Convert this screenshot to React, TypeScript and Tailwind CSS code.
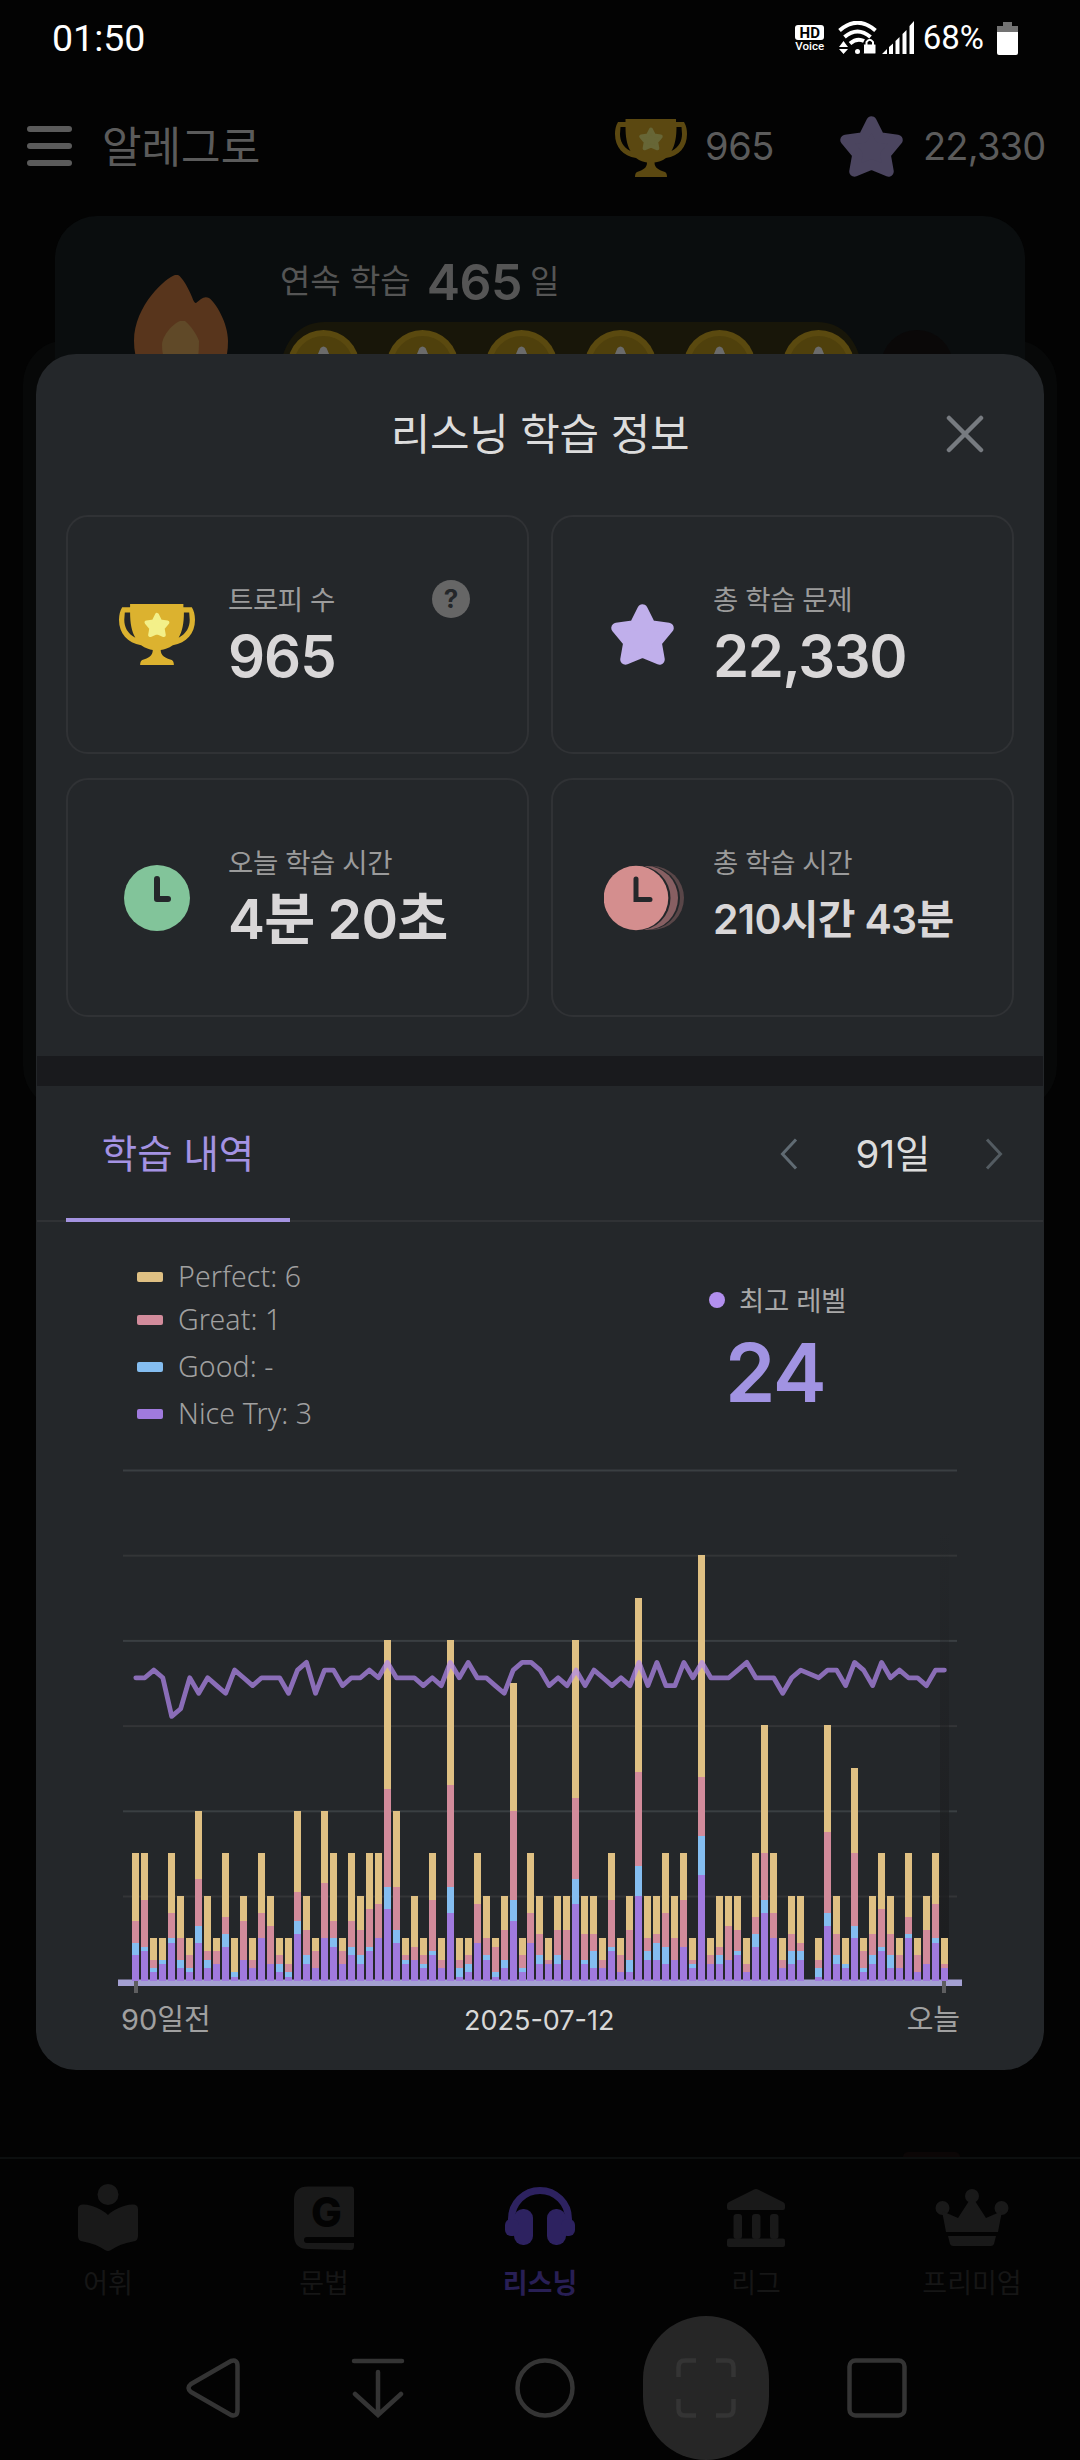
import type { ReactNode } from 'react'

type Day = [nice: number, good: number, great: number, perfect: number, level: number | null]

// Stacked totals per day (nice try, +good, +great, +perfect) and the level reached
const DAYS: Day[] = [
  [6, 9, 14, 30, 22], [7, 8, 19, 30, 22], [2, 3, 5, 10, 23], [4, 5, 5, 10, 22], [9, 10, 16, 30, 17],
  [3, 5, 10, 20, 18], [2, 3, 6, 10, 22], [9, 13, 24, 40, 20], [3, 5, 7, 20, 22], [4, 4, 7, 10, 21],
  [8, 11, 15, 30, 20], [1, 2, 2, 10, 23], [5, 5, 14, 20, 22], [3, 3, 5, 10, 21], [10, 10, 16, 30, 22],
  [4, 4, 13, 20, 22], [2, 4, 6, 10, 22], [1, 2, 4, 10, 20], [11, 14, 21, 40, 23], [4, 6, 12, 20, 24],
  [3, 3, 7, 10, 20], [10, 10, 23, 40, 23], [8, 10, 14, 30, 23], [4, 4, 7, 10, 21], [6, 8, 14, 30, 22],
  [4, 6, 12, 20, 22], [7, 8, 17, 30, 23], [10, 10, 18, 30, 22], [17, 22, 45, 80, 24], [9, 12, 22, 40, 22],
  [4, 5, 6, 10, 22], [5, 5, 8, 20, 22], [3, 4, 6, 10, 21], [6, 7, 19, 30, 22], [3, 3, 5, 10, 21],
  [16, 22, 46, 80, 24], [1, 3, 5, 10, 22], [2, 4, 6, 10, 24], [9, 9, 18, 30, 22], [5, 6, 10, 20, 22],
  [1, 2, 8, 10, 21], [3, 5, 12, 20, 20], [14, 19, 40, 70, 23], [2, 3, 6, 10, 24], [9, 9, 16, 30, 24],
  [4, 6, 11, 20, 23], [4, 4, 5, 10, 21], [4, 6, 12, 20, 22], [5, 5, 12, 20, 21], [18, 24, 43, 80, 23],
  [4, 5, 11, 20, 21], [3, 7, 11, 20, 23], [3, 3, 5, 10, 22], [7, 8, 19, 30, 21], [2, 2, 6, 10, 22],
  [2, 5, 12, 20, 21], [20, 27, 49, 90, 24], [5, 7, 10, 20, 21], [5, 9, 11, 20, 24], [4, 8, 16, 30, 21],
  [5, 5, 10, 20, 21], [8, 8, 19, 30, 24], [3, 4, 5, 10, 22], [25, 34, 48, 100, 24], [4, 4, 6, 10, 22],
  [4, 6, 8, 20, 22], [5, 5, 13, 20, 22], [6, 7, 12, 20, 23], [2, 2, 4, 10, 24], [8, 11, 15, 30, 22],
  [16, 19, 30, 60, 22], [10, 10, 16, 30, 22], [3, 3, 5, 10, 20], [4, 7, 11, 20, 22], [5, 7, 9, 20, 23],
  [0, 0, 0, 0, null], [1, 3, 5, 10, 22], [13, 16, 35, 60, 23], [4, 6, 11, 20, 23], [3, 4, 4, 10, 21],
  [10, 13, 30, 50, 24], [2, 3, 7, 10, 23], [4, 6, 11, 20, 21], [7, 8, 17, 30, 24], [3, 6, 11, 20, 22],
  [3, 3, 6, 10, 23], [10, 11, 15, 30, 22], [2, 2, 6, 10, 22], [4, 4, 12, 20, 21], [9, 10, 18, 30, 23],
  [3, 3, 4, 10, 23],
]

const COLORS = ['#a07ade', '#84bdf0', '#d28b9b', '#dfc083']

const LEGEND = [
  { label: 'Perfect: 6', color: 'bg-[#dfc083]', row: 'h-[43px]' },
  { label: 'Great: 1', color: 'bg-[#d28b9b]', row: 'h-[43px]' },
  { label: 'Good: -', color: 'bg-[#84bdf0]', row: 'h-[51px]' },
  { label: 'Nice Try: 3', color: 'bg-[#a07ade]', row: 'h-[43px]' },
]

const BASE = 513
const UNIT = 4.26

function StudyChart() {
  const points = DAYS.flatMap((d, i) =>
    d[4] === null ? [] : [`${(17.8 + i * 8.985).toFixed(1)},${(194.4 + (24 - d[4]) * 7.72).toFixed(1)}`]
  )

  return (
    <svg width="846" height="528" viewBox="0 0 846 528" className="block">
      <defs>
        <linearGradient id="today" x1="0" y1="0" x2="0" y2="1">
          <stop offset="0" stopColor="#1c1d1f" stopOpacity="0" />
          <stop offset="1" stopColor="#1c1d1f" />
        </linearGradient>
      </defs>
      {[0, 1, 2, 3, 4, 5].map((n) => (
        <rect key={n} x="5" y={1.5 + n * 85.2} width="834" height="2" fill={n % 2 ? '#333537' : '#3a3f42'} />
      ))}
      <rect x="822" y="60" width="9" height="452" fill="url(#today)" />
      <rect x="0" y="511.5" width="844" height="6.5" fill="#a4a0d2" />
      {DAYS.map((d, i) =>
        COLORS.map((fill, k) => {
          const from = k === 0 ? 0 : (d[k - 1] as number)
          const to = d[k] as number
          if (to === from) return null
          const top = Math.round(BASE - to * UNIT)
          const bottom = Math.round(BASE - from * UNIT)
          return <rect key={`${i}-${k}`} x={Math.floor(14.65 + i * 8.985)} y={top} width="7" height={bottom - top} fill={fill} />
        })
      )}
      <rect x="16" y="513" width="4" height="12" fill="#5e5e60" />
      <rect x="824" y="513" width="4" height="12" fill="#5e5e60" />
      <polyline
        points={points.join(' ')}
        fill="none"
        stroke="#b289ef"
        strokeOpacity="0.72"
        strokeWidth="4.8"
        strokeLinecap="round"
        strokeLinejoin="round"
      />
    </svg>
  )
}

const STAR_POINTS = '31.5,5.5 39.5,21.5 57.5,24 45.5,38.5 48.5,55.5 31.5,48.5 14.5,55.5 17.5,38.5 5.5,24 23.5,21.5'

function Star({ color }: { color: string }) {
  return (
    <svg width="63" height="61" viewBox="0 0 63 61">
      <polygon points={STAR_POINTS} fill={color} stroke={color} strokeWidth="10.5" strokeLinejoin="round" />
    </svg>
  )
}

function Trophy({ color, star, width }: { color: string; star: string; width: number }) {
  return (
    <svg width={width} height={(width * 58) / 72} viewBox="0 0 72 58">
      <path
        fill={color}
        fillRule="evenodd"
        d="M10.500 0H61V3H69Q72 8 72 15C72 28 64 37 51 39C47 42 43 43 39.500 43.500C39.500 49 44 51 50 53Q52 54 52 58H20Q20 54 22 53C28 51 32 49 32 43.500C29 43 25 42 21 39C8 37 0 28 0 15Q0 8 3 3H10.500ZM5.500 8H10.500C10.500 18 12 26 15.500 32C8 28 5 22 5 15ZM66.500 8H61.500C61.500 18 60 26 56.500 32C64 28 67 22 67 15Z"
      />
      <g transform="translate(24 8.300) scale(.38)">
        <polygon points={STAR_POINTS} fill={star} stroke={star} strokeWidth="10" strokeLinejoin="round" />
      </g>
    </svg>
  )
}

function TodayClock() {
  return (
    <svg width="66" height="66" viewBox="0 0 66 66">
      <circle cx="33" cy="33" r="33" fill="#82c49a" />
      <path d="M33 14V34H44" fill="none" stroke="#24272a" strokeWidth="6" strokeLinecap="round" strokeLinejoin="round" />
    </svg>
  )
}

function TotalClock() {
  return (
    <svg width="82" height="66" viewBox="0 0 82 66" className="ml-[6px]">
      <circle cx="48" cy="33" r="32" fill="#594648" />
      <circle cx="44" cy="33" r="32" fill="#24272a" />
      <circle cx="42" cy="33" r="32" fill="#875f62" />
      <circle cx="34" cy="33" r="32.500" fill="#24272a" />
      <circle cx="32" cy="33" r="32.300" fill="#d48e8e" />
      <path d="M32 14V34.500H46" fill="none" stroke="#24272a" strokeWidth="5" strokeLinecap="round" />
    </svg>
  )
}

interface StatCardProps {
  icon: ReactNode
  label: string
  value: string
  valueClass: string
  help?: boolean
}

function StatCard({ icon, label, value, valueClass, help }: StatCardProps) {
  return (
    <div className="h-[239px] rounded-[22px] border-2 border-[#303235] flex relative">
      <div className="w-[160px] pl-[18px] flex items-center justify-center shrink-0">{icon}</div>
      <div className="pt-[69px] whitespace-nowrap">
        <p className="h-[28px] leading-[28px] text-[27.500px] text-[#9b9b9b] tracking-[-0.4px]">{label}</p>
        <p className={`mt-[12px] h-[60px] leading-[60px] font-semibold text-[#d9d7d8] ${valueClass}`}>{value}</p>
      </div>
      {help && (
        <span className="absolute left-[364px] top-[63px] w-[38px] h-[38px] rounded-full bg-[#666] text-[#24272a] text-[26px] leading-[38px] font-bold text-center">
          ?
        </span>
      )}
    </div>
  )
}

function StatusBar() {
  return (
    <div className="h-[76px] flex items-center justify-between pl-[52px] pr-[62px] text-white font-[Roboto]">
      <span className="text-[37.500px] leading-[76px]">01:50</span>
      <div className="flex items-center">
        <div className="w-[30px] mr-[13px] flex flex-col items-center">
          <span className="w-[29px] h-[15px] rounded-[3px] bg-white text-black text-[15px] leading-[16px] font-bold text-center">HD</span>
          <span className="text-[11.500px] leading-[12px] font-medium">Voice</span>
        </div>
        <svg width="39" height="34" viewBox="0 0 39 34" fill="none" stroke="#fff" strokeWidth="4">
          <path d="M1.500 9.500Q19.500-6 37.500 9.500" />
          <path d="M6.500 16Q19.500 5 32.500 16" />
          <path d="M12 22.500Q19 16.500 26 20" />
          <circle cx="19.500" cy="30.500" r="2.500" fill="#fff" stroke="none" />
          <path d="M1 26L5.500 20L10 26ZM1 28H10L5.500 33Z" fill="#fff" stroke="none" />
          <rect x="25.500" y="23" width="12.500" height="10" rx="1" fill="#fff" stroke="#030303" strokeWidth="1" />
          <path d="M28.500 24V21Q31.800 16.500 35 21V24" strokeWidth="2" />
        </svg>
        <svg width="34" height="34" viewBox="0 0 34 34" fill="#fff" className="ml-[4px]">
          <path d="M1 33L6 28V33ZM8 26L12 22.500V33H8ZM14.500 20L18.500 16V33H14.500ZM21.500 13L25.500 9V33H21.500ZM28.500 5L33 0V33H28.500Z" />
        </svg>
        <span className="text-[33px] leading-[76px] ml-[8px] mr-[13px]">68%</span>
        <svg width="21" height="33" viewBox="0 0 21 33">
          <path d="M6 0H15V4H21V11H0V4H6Z" fill="#737373" />
          <path d="M0 10H21V31Q21 33 19 33H2Q0 33 0 31Z" fill="#fff" />
        </svg>
      </div>
    </div>
  )
}

function TopBar() {
  return (
    <div className="h-[140px] flex items-center text-[#5b5b5b]">
      <div className="ml-[27px] flex flex-col gap-[11px]">
        <span className="w-[45px] h-[6px] rounded-full bg-[#5b5b5b]" />
        <span className="w-[45px] h-[6px] rounded-full bg-[#5b5b5b]" />
        <span className="w-[45px] h-[6px] rounded-full bg-[#5b5b5b]" />
      </div>
      <h1 className="ml-[30px] mt-[2px] w-[513px] text-[43px] leading-none">알레그로</h1>
      <div className="w-[72px] mt-[3px]">
        <Trophy color="#5b4811" star="#676636" width={72} />
      </div>
      <span className="ml-[18px] w-[135px] text-[38px] leading-none tracking-[-0.4px]">965</span>
      <Star color="#4b455f" />
      <span className="ml-[20px] text-[38px] leading-none tracking-[-0.8px]">22,330</span>
    </div>
  )
}

function StreakCard() {
  return (
    <div className="relative z-10 mx-[55px] h-[180px] rounded-t-[42px] bg-[#0a0d0e] flex text-[#555] whitespace-nowrap">
      <svg width="94" height="90" viewBox="0 0 94 90" className="ml-[79px] mt-[59px] shrink-0">
        <path
          d="M41 0C33 2 0 30 0 66Q0 80 5 90H90Q94 80 94 66C94 48 82 28 75 23Q71 21 67 24L62 28Q60 28 58 22C54 12 48 2 44 0Z"
          fill="#58351c"
        />
        <path d="M46 46C40 48 28 60 28 70Q28 80 32 90H62Q65 84 65 66C62 58 56 50 51 46Z" fill="#604928" />
      </svg>
      <div className="ml-[52px] pt-[40px]">
        <div className="flex items-center h-[52px]">
          <span className="text-[33px]">연속 학습</span>
          <span className="ml-[16px] text-[50px] font-semibold tracking-[-0.5px]">465</span>
          <span className="ml-[8px] text-[32px]">일</span>
        </div>
        <svg width="700" height="46" viewBox="0 0 700 46" className="mt-[14px]">
          <path d="M0 46C4 20 18 0 45 0H537C564 0 578 20 582 46Z" fill="#181609" />
          {[0, 1, 2, 3, 4, 5].map((n) => (
            <g key={n} transform={`translate(${43.5 + n * 99} 44)`}>
              <circle r="36" fill="#5a490f" />
              <circle r="30" fill="#4f400c" />
              <path d="M-6 -11L-3 -18Q0 -21 3 -18L6 -11Z" fill="#6b6b6b" />
            </g>
          ))}
          <circle cx="637" cy="44" r="36" fill="#0a0808" />
        </svg>
      </div>
    </div>
  )
}

function BottomTabs() {
  return (
    <div className="h-[152px] border-t-2 border-[#0c0f0f] grid grid-cols-5 text-[27px] leading-[36px] text-center text-[#161616]">
      <div>
        <svg width="60" height="67" viewBox="0 0 60 67" fill="#191919" className="mx-auto mt-[25px] mb-[15px]">
          <circle cx="30" cy="10.500" r="10.500" />
          <path d="M30 31C24 25 14 21 6 20.500Q0 20 0 25V52Q0 57 5 57.500C14 59 21 62 27 66Q30 68 33 66C39 62 46 59 55 57.500Q60 57 60 52V25Q60 20 54 20.500C46 21 36 25 30 31Z" />
        </svg>
        어휘
      </div>
      <div>
        <svg width="60" height="64" viewBox="0 0 60 64" className="mx-auto mt-[27px] mb-[16px]">
          <path d="M14 .500H57Q60 .500 60 4V51H13Q10 51 10 54T13 57H60V60Q60 64 57 64L14 63Q0 63 0 49V14Q0 .500 14 .500Z" fill="#191919" />
          <text x="32.500" y="41" fontSize="41" fontWeight="800" textAnchor="middle" fill="#030303">G</text>
        </svg>
        문법
      </div>
      <div className="font-bold text-[#281f55]">
        <svg width="70" height="58" viewBox="0 0 70 58" fill="#2d2260" className="mx-auto mt-[28px] mb-[21px]">
          <path d="M6.500 36V32A28.500 28.500 0 0 1 63.500 32V36" fill="none" stroke="#2d2260" strokeWidth="7" />
          <rect x="9" y="22" width="19" height="36" rx="9" />
          <rect x="42" y="22" width="19" height="36" rx="9" />
          <rect x="0" y="32" width="14" height="17" rx="6" />
          <rect x="56" y="32" width="14" height="17" rx="6" />
        </svg>
        리스닝
      </div>
      <div>
        <svg width="58" height="58" viewBox="0 0 58 58" fill="#191919" className="mx-auto mt-[30px] mb-[19px]">
          <path d="M26 1Q29-1 32 1L56 13Q58 14 58 16V19Q58 21 56 21H2Q0 21 0 19V16Q0 14 2 13Z" />
          <rect x="6.500" y="25" width="8.500" height="25" rx="3" />
          <rect x="25" y="25" width="8.500" height="25" rx="3" />
          <rect x="43" y="25" width="8.500" height="25" rx="3" />
          <rect y="49.500" width="58" height="8.500" rx="2" />
        </svg>
        리그
      </div>
      <div>
        <svg width="74" height="57" viewBox="0 0 74 57" fill="#191919" className="mx-auto mt-[30px] mb-[20px]">
          <circle cx="37" cy="7" r="7" />
          <circle cx="7.500" cy="19" r="7" />
          <circle cx="66.500" cy="19" r="7" />
          <path d="M7 22L23 29L34 12H40L51 29L67 22L63 43H11Z" />
          <path d="M13 47H61L59 55Q58 57 56 57H18Q16 57 15 55Z" />
        </svg>
        프리미엄
      </div>
    </div>
  )
}

function SystemNav() {
  return (
    <div className="h-[151px] pt-[6px] flex items-center">
      <svg width="54" height="60" viewBox="0 0 54 60" fill="none" stroke="#343434" strokeWidth="4.500" className="ml-[186px]">
        <path d="M45 3Q51.500 1 51.500 8V52Q51.500 59 45 57L5 34Q0 30 5 26Z" strokeLinejoin="round" />
      </svg>
      <svg width="54" height="60" viewBox="0 0 54 60" fill="none" stroke="#343434" strokeWidth="4.500" strokeLinecap="round" className="ml-[111px]">
        <path d="M3 3H51M27 14V56M4 36L27 57L50 36" />
      </svg>
      <svg width="60" height="60" viewBox="0 0 60 60" fill="none" stroke="#343434" strokeWidth="4.500" className="ml-[110px]">
        <circle cx="30" cy="30" r="27.500" />
      </svg>
      <div className="ml-[68px] w-[126px] h-[144px] rounded-full bg-[#262626] flex items-center justify-center">
        <svg width="60" height="60" viewBox="0 0 60 60" fill="none" stroke="#343434" strokeWidth="4.500">
          <path d="M20 2.500H9Q2.500 2.500 2.500 9V19M40 2.500H51Q57.500 2.500 57.500 9V19M20 57.500H9Q2.500 57.500 2.500 51V41M40 57.500H51Q57.500 57.500 57.500 51V41" />
        </svg>
      </div>
      <svg width="60" height="60" viewBox="0 0 60 60" fill="none" stroke="#343434" strokeWidth="4.500" className="ml-[78px]">
        <rect x="2.500" y="2.500" width="55" height="55" rx="6" />
      </svg>
    </div>
  )
}

function ListeningInfoModal() {
  return (
    <section className="absolute z-20 left-[36px] top-[354px] w-[1008px] h-[1716px] rounded-[40px] bg-[#24272a] overflow-hidden">
      <header className="h-[161px] relative flex items-center justify-center">
        <h2 className="text-[43px] leading-none text-[#dcdcdc] tracking-[-0.3px]">리스닝 학습 정보</h2>
        <svg width="38" height="38" viewBox="0 0 38 38" className="absolute left-[910px] top-[61px]">
          <path d="M3 3L35 35M35 3L3 35" stroke="#777b80" strokeWidth="4.500" strokeLinecap="round" />
        </svg>
      </header>

      <div className="grid grid-cols-2 gap-x-[22px] gap-y-[24px] pl-[30px] pr-[30px]">
        <StatCard icon={<Trophy color="#dcb22f" star="#f3f089" width={76} />} label="트로피 수" value="965" valueClass="text-[58px] tracking-[-1px]" help />
        <StatCard icon={<Star color="#c0afeb" />} label="총 학습 문제" value="22,330" valueClass="text-[58px] tracking-[-1.4px]" />
        <StatCard icon={<TodayClock />} label="오늘 학습 시간" value="4분 20초" valueClass="text-[55.500px] tracking-[-0.8px]" />
        <StatCard icon={<TotalClock />} label="총 학습 시간" value="210시간 43분" valueClass="text-[41px] tracking-[-0.7px]" />
      </div>

      <div className="mt-[39px] mx-[1px] h-[30px] bg-[#191a1d]" />

      <div className="h-[136px] mx-[1px] flex items-stretch border-b-2 border-[#303235]">
        <div className="ml-[29px] w-[224px] -mb-[2px] pt-[4px] border-b-4 border-[#a493e0] flex items-center justify-center text-[38.500px] leading-none text-[#a493e3]">
          학습 내역
        </div>
        <div className="ml-auto pr-[40px] pt-[2px] flex items-center text-[38.500px] text-[#dcdcdc]">
          <svg width="18" height="32" viewBox="0 0 18 32" fill="none" stroke="#606b73" strokeWidth="3">
            <path d="M16 1.500L2.500 16L16 30.500" />
          </svg>
          <span className="w-[187px] pl-[3px] pt-[2px] text-center">91일</span>
          <svg width="18" height="32" viewBox="0 0 18 32" fill="none" stroke="#535b61" strokeWidth="3">
            <path d="M2 1.500L15.500 16L2 30.500" />
          </svg>
        </div>
      </div>

      <div className="h-[246px] flex">
        <ul className="ml-[101px] mt-[33px] w-[578px] font-['Noto_Sans'] font-[350] text-[28.500px] tracking-[0.1px] text-[#a0a0a0]">
          {LEGEND.map((item) => (
            <li key={item.label} className={`flex items-center ${item.row}`}>
              <span className={`w-[26px] h-[10px] rounded-[2px] mr-[15px] ${item.color}`} />
              {item.label}
            </li>
          ))}
        </ul>
        <div className="mt-[62px]">
          <div className="flex items-center text-[27.500px] leading-[30px] text-[#a8a8a8] tracking-[-0.4px]">
            <span className="w-[16px] h-[16px] rounded-full bg-[#b28fee] mr-[14px] -ml-[6px]" />
            <span className="pt-[2px]">최고 레벨</span>
          </div>
          <p className="ml-[10px] mt-[17px] text-[81px] leading-[80px] font-semibold text-[#a193e2] tracking-[-1.5px]">24</p>
        </div>
      </div>

      <div className="ml-[82px] w-[846px]">
        <StudyChart />
        <div className="mt-[4px] ml-[3px] mr-[4px] h-[40px] flex items-center justify-between text-[29px] text-[#a0a0a0] relative">
          <span>90일전</span>
          <span className="absolute left-[343px] text-[27px] pt-[2px] text-[#d8d8d8]">2025-07-12</span>
          <span>오늘</span>
        </div>
      </div>
    </section>
  )
}

export default function App() {
  return (
    <main className="relative w-[1080px] h-[2460px] bg-[#030303] overflow-hidden flex flex-col font-[Inter,'Noto_Sans_CJK_KR',sans-serif]">
      <StatusBar />
      <TopBar />
      <StreakCard />
      <div className="-mt-[56px] mx-[23px] h-[770px] rounded-[44px] bg-[#070808]" />
      <div className="mt-auto flex flex-col">
        <span className="ml-[903px] w-[57px] h-[5px] rounded-t-full bg-[#0b0606]" />
        <BottomTabs />
        <SystemNav />
      </div>
      <ListeningInfoModal />
    </main>
  )
}
